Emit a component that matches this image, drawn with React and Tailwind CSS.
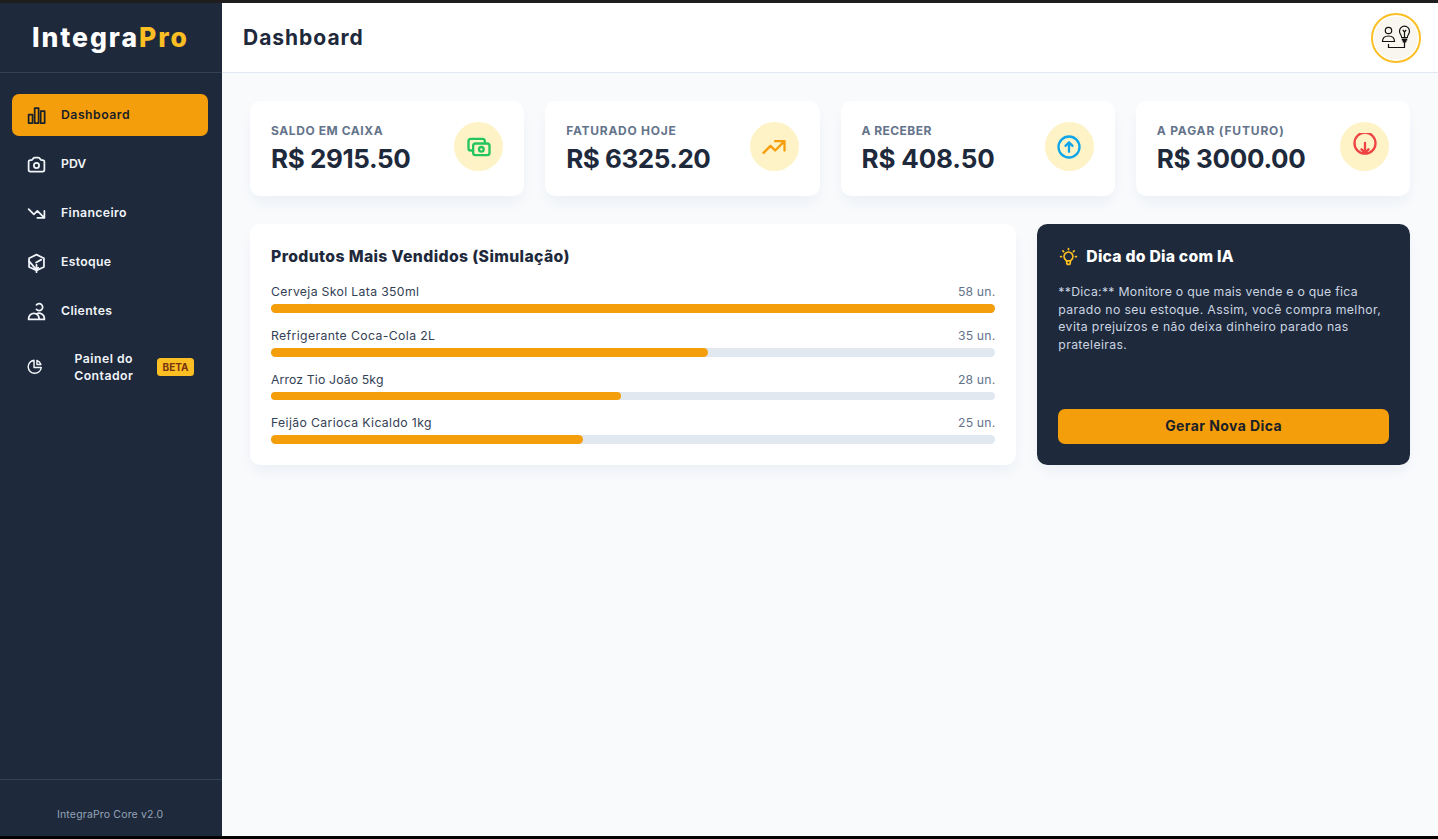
const icons = {
  chart: ["M3 11h4.5v9.700h-4.5z", "M9.900 3.600h4.5v17.100h-4.5z", "M16.800 7h4.5v13.700h-4.5z"],
  camera: [
    "M3 9a2 2 0 012-2h.93a2 2 0 001.664-.89l.812-1.22A2 2 0 0110.07 4h3.86a2 2 0 011.664.89l.812 1.22A2 2 0 0018.07 7H19a2 2 0 012 2v9a2 2 0 01-2 2H5a2 2 0 01-2-2V9z",
    "M15 13a3 3 0 11-6 0 3 3 0 016 0z",
  ],
  down: ["M13 17h8m0 0V9m0 8l-8-8-4 4-6-6"],
  cube: ["M12 3l8.5 4.2v10L12 21l-8.5-3.8v-10z", "M11.5 12l6-3.3", "M3.5 10.5L12 20.5M12 14.5v8.5M12 20.5l2-2.5"],
  users: ["M12 4.354a4 4 0 110 5.292M15 21H3v-1a6 6 0 0112 0v1zm0 0h6v-1a6 6 0 00-9-5.197"],
  pie: ["M11 3.055A9.001 9.001 0 1020.945 13H11V3.055z", "M20.488 9H15V3.512A9.025 9.025 0 0120.488 9z"],
  cash: [
    "M17 9V7a2 2 0 00-2-2H5a2 2 0 00-2 2v6a2 2 0 002 2h2m2 4h10a2 2 0 002-2v-6a2 2 0 00-2-2H9a2 2 0 00-2 2v6a2 2 0 002 2zm7-5a2 2 0 11-4 0 2 2 0 014 0z",
  ],
  up: ["M13 7h8m0 0v8m0-8l-8 8-4-4-6 6"],
  circleUp: ["M9 11l3-3m0 0l3 3m-3-3v8m0-13a9 9 0 110 18 9 9 0 010-18z"],
  circleDown: ["M15 14l-3 3m0 0l-3-3m3 3V8.5m0 9.2a9 9 0 110-18 9 9 0 010 18z"],
  bulb: [
    "M9.663 17h4.673M12 3v1m6.364 1.636l-.707.707M21 12h-1M4 12H3m3.343-5.657l-.707-.707m2.828 9.9a5 5 0 117.072 0l-.548.547A3.374 3.374 0 0014 18.469V19a2 2 0 11-4 0v-.531c0-.895-.356-1.754-.988-2.386l-.548-.547z",
  ],
};

function Icon({ name, className }) {
  return (
    <svg viewBox="0 0 24 24" fill="none" stroke="currentColor" strokeWidth="2" strokeLinecap="round" strokeLinejoin="round" className={className}>
      {icons[name].map((d) => (
        <path key={d} d={d} />
      ))}
    </svg>
  );
}

const nav = [
  { icon: "chart", label: "Dashboard", active: true, track: "tracking-[0.5px]" },
  { icon: "camera", label: "PDV", track: "tracking-[0px]" },
  { icon: "down", label: "Financeiro", track: "tracking-[0.38px]" },
  { icon: "cube", label: "Estoque", track: "tracking-[0.3px]" },
  { icon: "users", label: "Clientes", track: "tracking-[0.38px]" },
];

const stats = [
  { label: "SALDO EM CAIXA", value: "R$ 2915.50", icon: "cash", color: "text-[#22c55e]", lt: "tracking-[0.58px]", vt: "tracking-[-0.4px]" },
  { label: "FATURADO HOJE", value: "R$ 6325.20", icon: "up", color: "text-[#f59e0b]", lt: "tracking-[0.73px]", vt: "tracking-[-0.48px]" },
  { label: "A RECEBER", value: "R$ 408.50", icon: "circleUp", color: "text-[#0ea5e9]", lt: "tracking-[0.45px]", vt: "tracking-[-0.15px]" },
  { label: "A PAGAR (FUTURO)", value: "R$ 3000.00", icon: "circleDown", color: "text-[#ef4444]", lt: "tracking-[0.84px]", vt: "tracking-[-0.32px]" },
];

const products = [
  { name: "Cerveja Skol Lata 350ml", qty: 58, track: "tracking-[0.33px]" },
  { name: "Refrigerante Coca-Cola 2L", qty: 35, track: "tracking-[0.38px]" },
  { name: "Arroz Tio João 5kg", qty: 28, track: "tracking-[0.13px]" },
  { name: "Feijão Carioca Kicaldo 1kg", qty: 25, track: "tracking-[0.36px]" },
];

const tip = [
  { text: "**Dica:** Monitore o que mais vende e o que fica", track: "tracking-[0.28px]" },
  { text: "parado no seu estoque. Assim, você compra melhor,", track: "tracking-[0.38px]" },
  { text: "evita prejuízos e não deixa dinheiro parado nas", track: "tracking-[0.38px]" },
  { text: "prateleiras.", track: "tracking-[0.35px]" },
];

function Sidebar() {
  return (
    <aside className="flex w-[222px] shrink-0 flex-col bg-[#1e293b]">
      <div className="flex h-[70px] items-center border-b border-[#334155] pl-[32px] text-[26.5px] font-extrabold whitespace-nowrap text-white">
        <span className="tracking-[1.95px]">
          Integra<span className="text-[#fbbf24]">Pro</span>
        </span>
      </div>
      <nav className="flex flex-1 flex-col gap-[7px] pt-[21px] pr-[14px] pl-[12px] text-[12.25px] font-semibold">
        {nav.map((n) => (
          <a
            key={n.label}
            className={
              n.active
                ? "flex h-[42px] items-center gap-[14px] rounded-[7px] bg-[#f59e0b] px-[14px] text-[#1a2027]"
                : "flex h-[42px] items-center gap-[14px] rounded-[7px] px-[14px] text-[#f1f5f9]"
            }
          >
            <Icon name={n.icon} className="size-[21px]" />
            <span className={n.track}>{n.label}</span>
          </a>
        ))}
        <a className="flex h-[56px] items-center px-[14px] text-[#f1f5f9]">
          <Icon name="pie" className="size-[17.5px]" />
          <span className="flex-1 pl-[7px] text-center leading-[17.5px] tracking-[0.48px]">
            Painel do
            <br />
            Contador
          </span>
          <span className="flex h-[18px] w-[37px] items-center justify-center rounded-[3.5px] bg-[#fbbf24] text-[10px] font-bold text-[#78350f]">BETA</span>
        </a>
      </nav>
      <footer className="h-[57px] border-t border-[#334155] pt-[28px] pl-[57px] text-[10.5px] leading-[14px] text-[#94a3b8]">
        <span className="tracking-[0.17px]">IntegraPro Core v2.0</span>
      </footer>
    </aside>
  );
}

function Avatar() {
  return (
    <div className="flex size-[50px] items-center justify-center rounded-full border-2 border-[#fbbf24] bg-white">
      <svg viewBox="0 0 46 46" className="size-[46px]" fill="none" stroke="#111" strokeWidth="1.2">
        <circle cx="23" cy="23" r="21.5" fill="#f9f5ef" stroke="none" />
        <circle cx="15.5" cy="15.5" r="3.2" />
        <path d="M9.5 26.5c0-3.5 2.5-5.5 6-5.5s6 2 6 5.5z" />
        <path d="M28.7 22.5c0-2.5-2.2-3.2-2.2-6.3a5 5 0 0 1 10 0c0 3.1-2.2 3.8-2.2 6.3zM31.5 22v-5l-1.7-2M31.5 17l1.7-2M31.5 27v5.5h-16v-3.5" />
        <path strokeWidth="1.8" d="M28.7 24.5h5.6M29.700 26.5h3.6" />
      </svg>
    </div>
  );
}

export default function App() {
  return (
    <div className="flex h-[839px] w-full flex-col overflow-hidden border-t-[3px] border-b-[3px] border-t-[#1f1d1e] border-b-black bg-[#f8fafc] font-['Inter','Open_Sans',sans-serif]">
      <div className="flex min-h-0 flex-1">
        <Sidebar />
        <div className="flex min-w-0 flex-1 flex-col">
          <header className="flex h-[70px] shrink-0 items-center justify-between border-b border-[#e2e8f0] bg-white pr-[17px] pl-[21px]">
            <h1 className="text-[21px] font-bold tracking-[0.98px] text-[#1e293b]">Dashboard</h1>
            <Avatar />
          </header>
          <main className="flex flex-col gap-[28px] p-[28px]">
            <section className="grid grid-cols-4 gap-[21px]">
              {stats.map((s) => (
                <div key={s.label} className="flex h-[95px] items-start justify-between rounded-[10.5px] bg-white p-[21px] shadow-[0_8px_16px_-4px_rgba(30,58,110,0.07)]">
                  <div className="whitespace-nowrap">
                    <div className={"text-[12px] leading-[17.5px] font-bold text-[#64748b] " + s.lt}>{s.label}</div>
                    <div className={"text-[26px] leading-[37px] font-bold text-[#1e293b] " + s.vt}>{s.value}</div>
                  </div>
                  <div className={"flex size-[49px] items-center justify-center rounded-full bg-[#fef3c7] " + s.color}>
                    <Icon name={s.icon} className="size-[28px]" />
                  </div>
                </div>
              ))}
            </section>
            <section className="grid grid-cols-3 gap-[21px]">
              <div className="col-span-2 h-[241px] rounded-[10.5px] bg-white p-[21px] shadow-[0_8px_16px_-4px_rgba(30,58,110,0.07)]">
                <h2 className="text-[15.75px] leading-[24.5px] font-extrabold text-[#1e293b]">
                  <span className="tracking-[0.37px]">Produtos Mais Vendidos (Simulação)</span>
                </h2>
                <div className="mt-[13.5px] flex flex-col gap-[14px]">
                  {products.map((p) => (
                    <div key={p.name}>
                      <div className="flex justify-between text-[12.25px] leading-[17.5px]">
                        <span className={"text-[#334155] " + p.track}>{p.name}</span>
                        <span className="tracking-[0.15px] text-[#64748b]">{p.qty} un.</span>
                      </div>
                      <div className="mt-[3.5px] h-[8.75px] rounded-full bg-[#e2e8f0]">
                        <div className="h-full rounded-full bg-[#f59e0b]" style={{ width: `${(p.qty / 58) * 100}%` }} />
                      </div>
                    </div>
                  ))}
                </div>
              </div>
              <div className="flex h-[241px] flex-col rounded-[10.5px] bg-[#1e293b] p-[21px] shadow-[0_8px_16px_-4px_rgba(30,58,110,0.07)]">
                <h2 className="flex items-center gap-[7px] text-[15.75px] leading-[24.5px] font-extrabold text-white">
                  <Icon name="bulb" className="mb-px size-[21px] text-[#fbbf24]" />
                  <span className="tracking-[0.22px]">Dica do Dia com IA</span>
                </h2>
                <p className="mt-[13.7px] text-[12.25px] leading-[17.5px] whitespace-nowrap text-[#cbd5e1]">
                  {tip.map((t) => (
                    <span key={t.text} className={"block w-fit " + t.track}>
                      {t.text}
                    </span>
                  ))}
                </p>
                <button className="mt-auto flex h-[35px] items-center justify-center rounded-[7px] bg-[#f59e0b] pb-[2px] text-[14px] font-bold text-[#1a2027]">
                  <span className="tracking-[0.42px]">Gerar Nova Dica</span>
                </button>
              </div>
            </section>
          </main>
        </div>
      </div>
    </div>
  );
}
